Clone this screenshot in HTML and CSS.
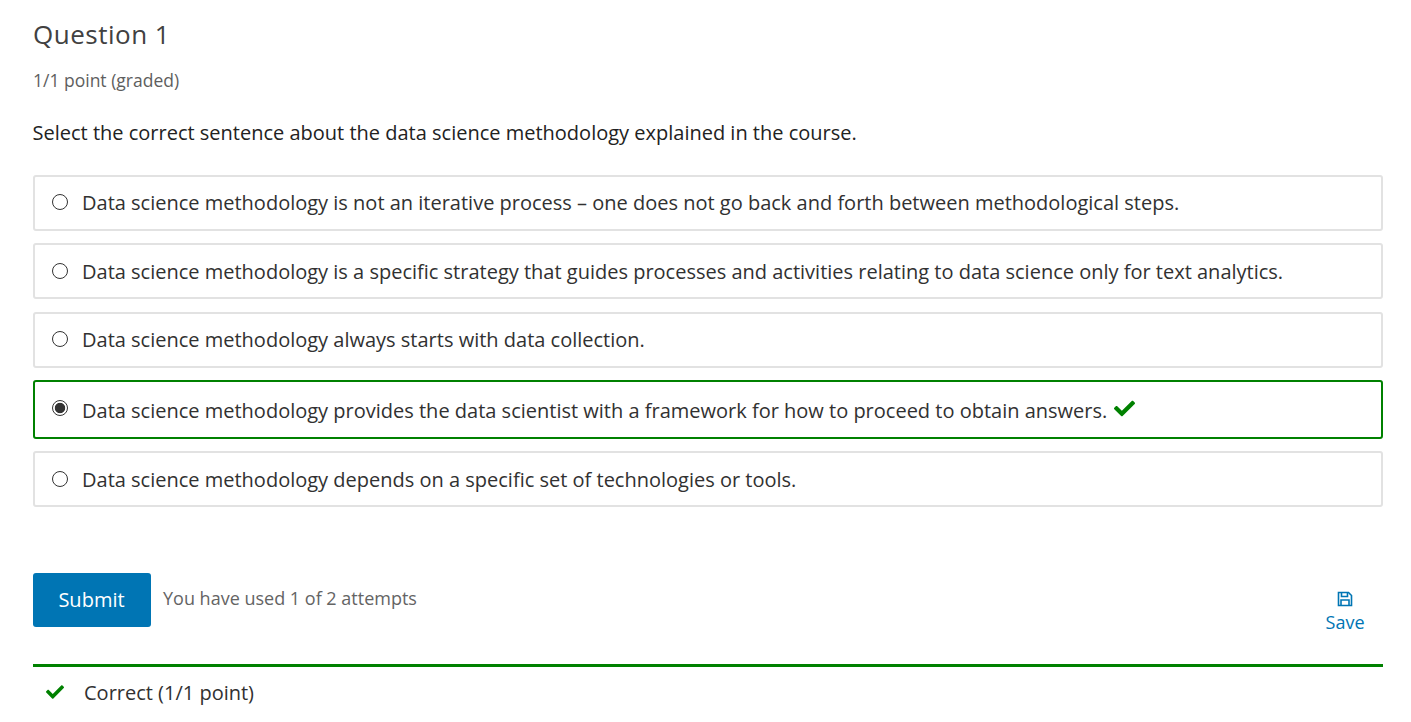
FILE: index.html
```html
<!DOCTYPE html>
<html lang="en">
<head>
    <meta charset="UTF-8">
    <title>Question 1</title>
    <link rel="stylesheet" href="styles.css">
</head>
<body>

    <div class="problem">
        <h3 class="problem-title">Question 1</h3>
        <div class="problem-progress">1/1 point (graded)</div>
        <p class="problem-text">Select the correct sentence about the data science methodology explained in the course.</p>

        <div class="choices">
            <label class="choice">
                <input type="radio" name="q1">
                <span>Data science methodology is not an iterative process – one does not go back and forth between methodological steps.</span>
            </label>
            <label class="choice">
                <input type="radio" name="q1">
                <span>Data science methodology is a specific strategy that guides processes and activities relating to data science only for text analytics.</span>
            </label>
            <label class="choice">
                <input type="radio" name="q1">
                <span>Data science methodology always starts with data collection.</span>
            </label>
            <label class="choice choice-correct">
                <input type="radio" name="q1" checked>
                <span>Data science methodology provides the data scientist with a framework for how to proceed to obtain answers.</span>
                <svg class="check check-inline" viewBox="0 0 512 512"><path d="M173.9 439.4 7.5 273c-10-10-10-26.2 0-36.2l36.2-36.2c10-10 26.2-10 36.2 0L192 312.7 432.1 72.6c10-10 26.2-10 36.2 0l36.2 36.2c10 10 10 26.2 0 36.2L210.1 439.4c-10 10-26.2 10-36.2 0z"/></svg>
            </label>
            <label class="choice">
                <input type="radio" name="q1">
                <span>Data science methodology depends on a specific set of technologies or tools.</span>
            </label>
        </div>

        <div class="actions">
            <button class="submit">Submit</button>
            <div class="attempts">You have used 1 of 2 attempts</div>
            <button class="save">
                <svg class="save-icon" viewBox="0 0 16 16">
                    <path d="M1.5 1.5H11.5L14.5 4.5V14.5H1.5Z"/>
                    <path d="M4.5 1.5V5.5H10.5V1.5"/>
                    <path d="M4 14.5V9H12V14.5"/>
                </svg>
                <span>Save</span>
            </button>
        </div>

        <div class="notification">
            <svg class="check check-note" viewBox="0 0 512 512"><path d="M173.9 439.4 7.5 273c-10-10-10-26.2 0-36.2l36.2-36.2c10-10 26.2-10 36.2 0L192 312.7 432.1 72.6c10-10 26.2-10 36.2 0l36.2 36.2c10 10 10 26.2 0 36.2L210.1 439.4c-10 10-26.2 10-36.2 0z"/></svg>
            <span>Correct (1/1 point)</span>
        </div>
    </div>

</body>
</html>
```

FILE: styles.css
```css
body {
    font-family: 'Open Sans', sans-serif;
    margin: 0;
    background-color: #fff;
    color: #313131;
    overflow: hidden;
}

.problem {
    width: 1350px;
    padding: 17px 0 0 33px;
}

.problem-title {
    font-size: 26px;
    line-height: 35px;
    font-weight: 400;
    letter-spacing: 0.5px;
    color: #414141;
    margin: 0;
}

.problem-progress {
    font-size: 17.5px;
    line-height: 24px;
    color: #5e5e5e;
    margin-top: 16px;
}

.problem-text {
    font-size: 20px;
    line-height: 28px;
    color: #222;
    margin: 27px 0 0 -0.5px;
}

.choices {
    display: flex;
    flex-direction: column;
    gap: 12.5px;
    margin-top: 27.7px;
}

.choice {
    display: flex;
    align-items: center;
    height: 56px;
    box-sizing: border-box;
    padding-left: 17px;
    border: 2px solid #e2e2e2;
    border-radius: 3px;
    font-size: 20px;
    color: #313131;
}

.choice input {
    appearance: none;
    width: 16px;
    height: 16px;
    margin: -1px 14px 0 0;
    border: 1px solid #333;
    border-radius: 50%;
    background-color: #fff;
}

.choice input:checked {
    background: radial-gradient(circle, #333 0, #333 4.8px, #fff 5.6px);
    border-color: #333;
}

.choice-correct {
    height: 58.7px;
    padding-top: 2px;
    border-color: #008100;
}

.choice-correct input {
    margin-top: -6px;
}

.check {
    fill: #008100;
}

.check-inline {
    width: 21px;
    height: 21px;
    margin: -4px 0 0 7px;
}

.actions {
    display: flex;
    align-items: flex-start;
    margin-top: 66px;
    height: 91px;
}

.submit {
    width: 118px;
    height: 54px;
    background-color: #0075b4;
    color: #fff;
    border: none;
    border-radius: 3px;
    font-family: inherit;
    font-size: 20px;
    padding: 0 1px 2px 0;
}

.attempts {
    font-size: 18px;
    line-height: 24px;
    color: #646464;
    margin: 13px 0 0 12px;
}

.save {
    display: flex;
    flex-direction: column;
    align-items: center;
    gap: 3px;
    margin: 18px 18.5px 0 auto;
    padding: 0;
    border: none;
    background: none;
    font-family: inherit;
    font-size: 18px;
    line-height: 24px;
    color: #0075b4;
}

.save-icon {
    width: 16px;
    height: 16px;
    fill: none;
    stroke: #0075b4;
    stroke-width: 1.6;
}

.notification {
    display: flex;
    align-items: center;
    border-top: 3px solid #008100;
    height: 51px;
    padding-left: 13px;
    font-size: 20px;
    color: #313131;
}

.check-note {
    width: 18px;
    height: 18px;
    margin: -2px 20px 0 0;
}
```
